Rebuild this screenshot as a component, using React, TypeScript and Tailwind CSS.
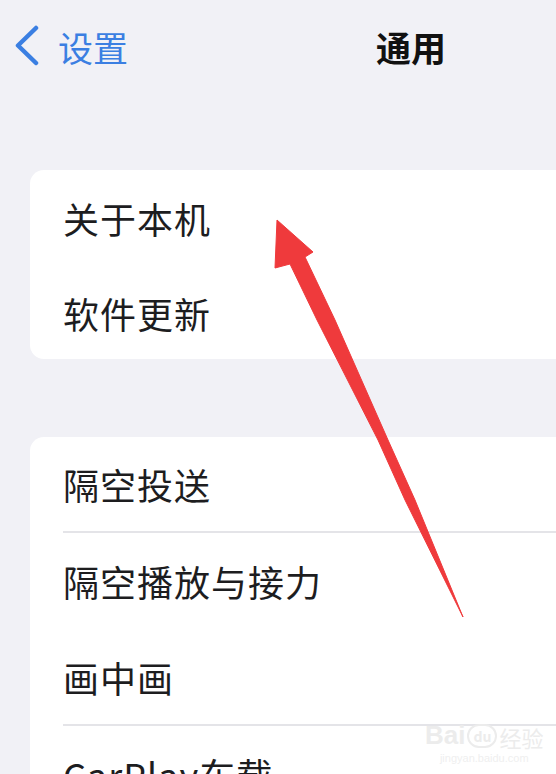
import React from "react";

const font = { fontFamily: '"Noto Sans CJK SC", "Noto Sans", sans-serif' };

function Row({ label, h }: { label: string; h: string }) {
  return (
    <div className={`flex items-center pl-[33px] ${h}`}>
      <span className="text-[36px] leading-none text-[#1d1d1f] tracking-[1px]">{label}</span>
    </div>
  );
}

function Sep() {
  return <div className="ml-[33px] h-[2px] bg-[#e4e4e8]" />;
}

export default function App() {
  return (
    <div
      className="relative w-[556px] h-[774px] overflow-hidden bg-[#f1f1f6]"
      style={font}
    >
      {/* header */}
      <div className="flex items-center h-[94px] pb-[2px]">
        <div className="w-[376px] flex items-center pl-[15px]">
          <svg width="24" height="42" viewBox="0 0 24 42" className="mr-[19px]">
            <path
              d="M21 3 L3 20.5 L21 38"
              fill="none"
              stroke="#3b7fe2"
              strokeWidth="4.5"
              strokeLinecap="round"
              strokeLinejoin="round"
            />
          </svg>
          <span className="text-[35px] leading-none text-[#3b7fe2]">设置</span>
        </div>
        <span className="text-[35px] leading-none font-bold text-[#111]">通用</span>
      </div>

      <div className="h-[76px]" />

      {/* card 1 */}
      <div className="ml-[30px] bg-white rounded-l-[14px] h-[189px] flex flex-col">
        <Row label="关于本机" h="h-[96px]" />
        <Row label="软件更新" h="h-[93px]" />
      </div>

      <div className="h-[78px]" />

      {/* card 2 */}
      <div className="ml-[30px] bg-white rounded-tl-[14px] flex flex-col">
        <Row label="隔空投送" h="h-[94px]" />
        <Sep />
        <Row label="隔空播放与接力" h="h-[96px]" />
        <Row label="画中画" h="h-[95px]" />
        <Sep />
        <Row label="CarPlay车载" h="h-[96px]" />
      </div>

      {/* red arrow annotation */}
      <svg
        className="absolute left-0 top-0 pointer-events-none"
        width="556"
        height="774"
        viewBox="0 0 556 774"
      >
        <polygon
          points="277,220 313,252 305,257 335,320 388,440 415,500 463,617 405,500 378,440 317,320 290,264 275,268"
          fill="#ef3a3c"
          stroke="#ef3a3c"
          strokeWidth="1"
          strokeLinejoin="round"
        />
      </svg>

      {/* watermark */}
      <div className="absolute left-[425px] top-[722px] flex flex-col items-center pointer-events-none">
        <div className="flex items-end text-[#ececec] leading-none">
          <span className="text-[26px] font-bold" style={{ fontFamily: '"Liberation Sans", sans-serif' }}>Bai</span>
          <span className="mx-[2px] flex items-center justify-center w-[30px] h-[24px] rounded-full border-2 border-[#ececec] text-[14px] font-bold">du</span>
          <span className="text-[22px]">经验</span>
        </div>
        <span className="text-[11px] text-[#efefef] mt-[2px]" style={{ fontFamily: '"Liberation Sans", sans-serif' }}>jingyan.baidu.com</span>
      </div>
    </div>
  );
}
